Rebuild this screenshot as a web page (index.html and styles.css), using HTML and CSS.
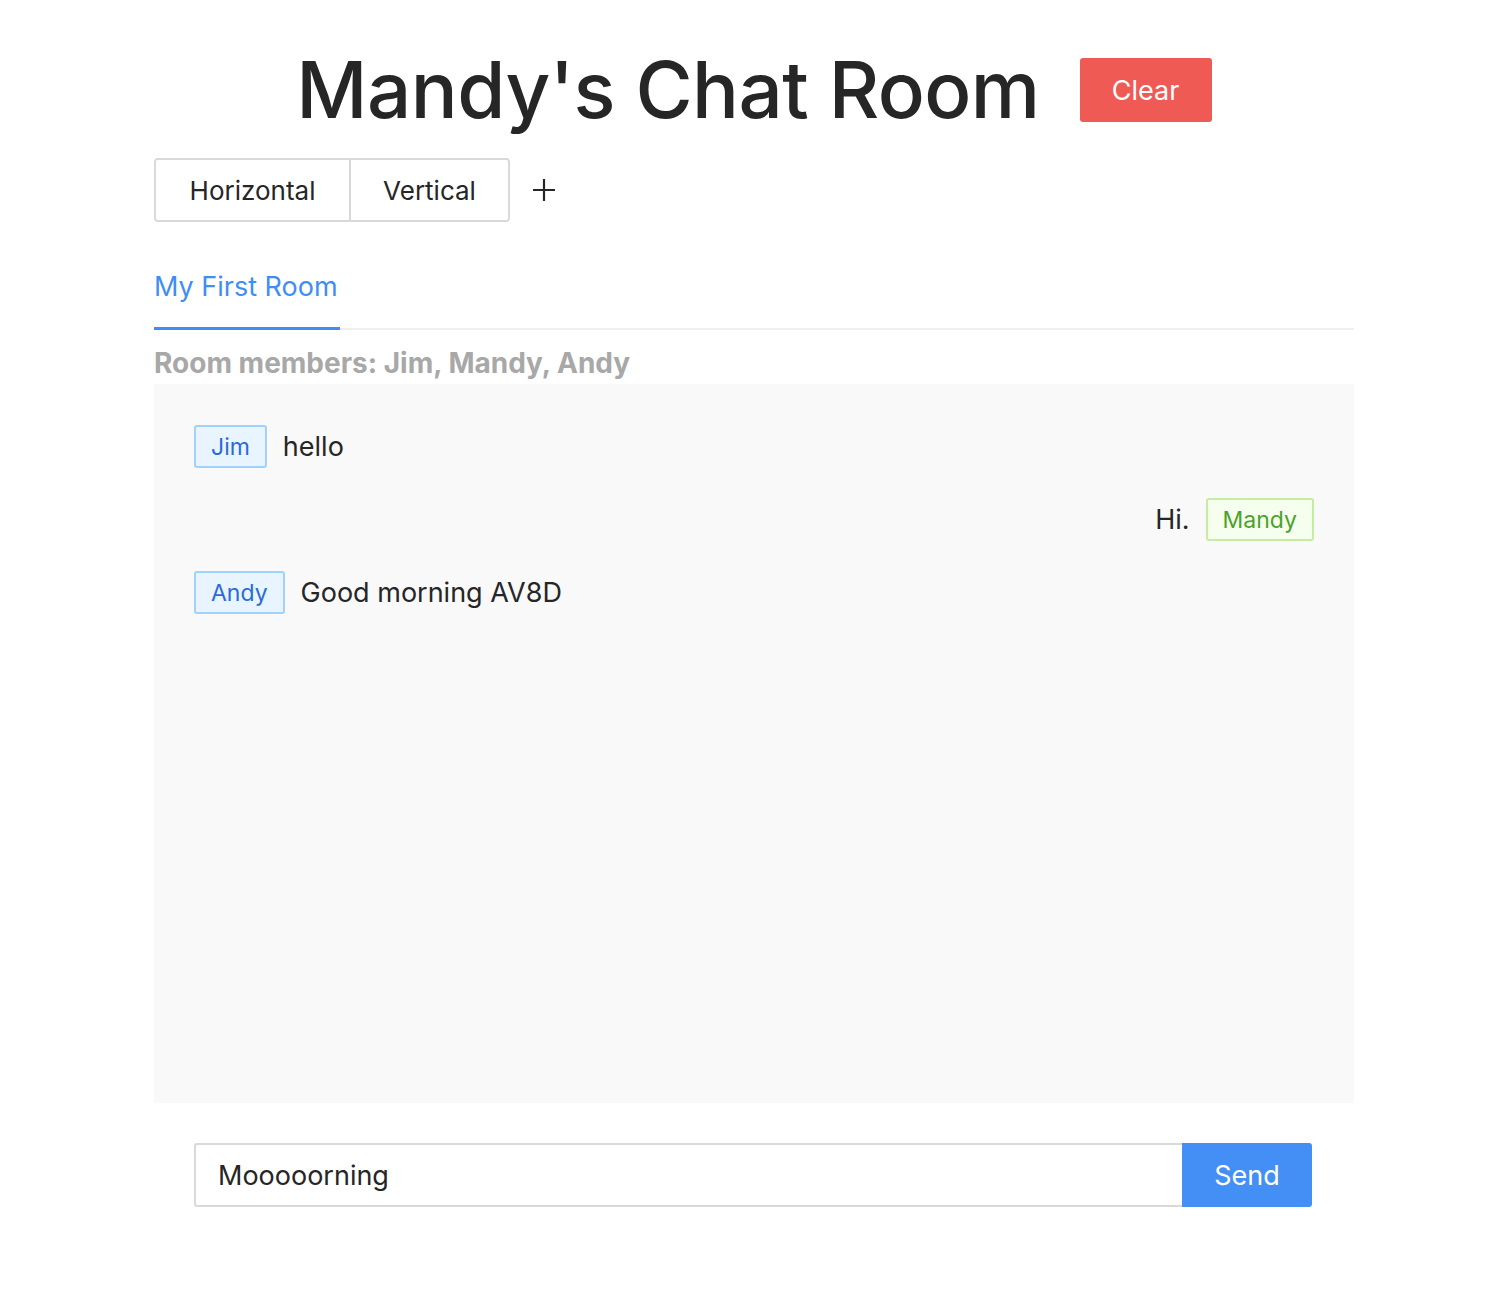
FILE: index.html
```html
<!DOCTYPE html>
<html>
<head>
<meta charset="utf-8">
<link rel="stylesheet" href="styles.css">
</head>
<body>
<div class="page">
  <header class="header">
    <h1 class="title">Mandy's Chat Room</h1>
    <button class="btn-clear">Clear</button>
  </header>
  <div class="toolbar">
    <div class="segmented">
      <button class="seg">Horizontal</button>
      <button class="seg">Vertical</button>
    </div>
    <button class="add" aria-label="add">
      <svg width="24" height="24" viewBox="0 0 24 24"><path d="M12 1v22M1 12h22" stroke="#262626" stroke-width="2.2" fill="none"/></svg>
    </button>
  </div>
  <div class="tabs">
    <div class="tab active">My First Room</div>
  </div>
  <div class="members">Room members: Jim, Mandy, Andy</div>
  <div class="chat">
    <div class="msg">
      <span class="tag tag-blue">Jim</span>
      <span class="text">hello</span>
    </div>
    <div class="msg msg-right">
      <span class="text">Hi.</span>
      <span class="tag tag-green">Mandy</span>
    </div>
    <div class="msg">
      <span class="tag tag-blue">Andy</span>
      <span class="text">Good morning AV8D</span>
    </div>
  </div>
  <div class="composer">
    <input class="input" type="text" value="Mooooorning">
    <button class="btn-send">Send</button>
  </div>
</div>
</body>
</html>
```

FILE: styles.css
```css
* { box-sizing: border-box; }
body {
  margin: 0;
  background: #fff;
  font-family: Inter, "Noto Sans", "Liberation Sans", sans-serif;
  color: #262626;
}
.page {
  width: 1200px;
  margin-left: 154px;
  padding-top: 42px;
}
.header {
  display: flex;
  justify-content: center;
  align-items: center;
  gap: 40px;
  height: 96px;
}
.title {
  margin: 0;
  font-size: 78px;
  font-weight: 500;
  letter-spacing: -0.5px;
  color: #262626;
  line-height: 1;
}
.btn-clear {
  background: #ef5a55;
  color: #fff;
  border: none;
  border-radius: 3px;
  width: 132px;
  height: 64px;
  font: inherit;
  font-size: 27px;
  margin-top: 0;
}
.toolbar {
  display: flex;
  align-items: center;
  margin-top: 20px;
}
.segmented {
  display: flex;
  border: 2px solid #d9d9d9;
  border-radius: 4px;
  height: 64px;
}
.seg {
  background: #fff;
  border: none;
  font: inherit;
  font-size: 26px;
  color: #262626;
  padding: 0 30px;
}
.seg + .seg { border-left: 2px solid #d9d9d9; }
.seg:first-child { width: 193px; border-radius: 3px 0 0 3px; }
.seg:last-child { width: 159px; border-radius: 0 3px 3px 0; }
.add {
  background: none;
  border: none;
  padding: 0;
  margin-left: 22px;
  width: 24px;
  height: 24px;
  display: flex;
}
.tabs {
  margin-top: 48px;
  border-bottom: 2px solid #efefef;
  display: flex;
}
.tab {
  font-size: 27px;
  color: #3f8ef3;
  padding-bottom: 24px;
  margin-bottom: -2px;
}
.tab.active { border-bottom: 3px solid #3f8ef3; width: 186px; }
.members {
  font-size: 28px;
  font-weight: 700;
  color: #a8a8a8;
  margin-top: 15px;
  line-height: 36px;
}
.chat {
  margin-top: 3px;
  background: #f9f9f9;
  height: 719px;
  padding: 41px 40px;
  display: flex;
  flex-direction: column;
  gap: 30px;
}
.msg {
  display: flex;
  align-items: center;
  gap: 16px;
}
.msg-right { justify-content: flex-end; }
.text { font-size: 27px; color: #262626; }
.tag {
  display: inline-flex;
  align-items: center;
  height: 43px;
  padding: 0 15px;
  font-size: 23px;
  border: 2px solid;
  border-radius: 3px;
}
.tag-blue { background: #e8f5ff; border-color: #a0d2fb; color: #2c6ad9; }
.tag-green { background: #f6ffed; border-color: #c4eda0; color: #4ca22a; }
.composer {
  display: flex;
  margin: 40px 42px 0 40px;
  height: 64px;
}
.input {
  flex: 1;
  border: 2px solid #d9d9d9;
  border-right: none;
  border-radius: 3px 0 0 3px;
  font: inherit;
  font-size: 27px;
  color: #262626;
  padding: 0 22px;
  outline: none;
}
.btn-send {
  width: 130px;
  background: #448ff6;
  color: #fff;
  border: none;
  border-radius: 0 3px 3px 0;
  font: inherit;
  font-size: 27px;
}
```
